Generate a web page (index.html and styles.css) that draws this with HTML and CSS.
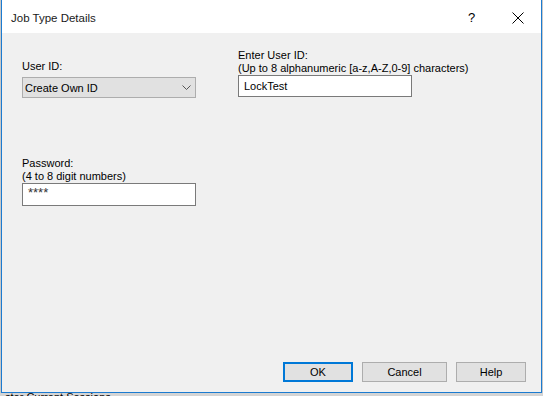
FILE: index.html
```html
<!DOCTYPE html>
<html lang="en">
  <head>
    <meta charset="UTF-8" />
    <title>Job Type Details</title>
    <link rel="stylesheet" href="styles.css">
  </head>
  <body>
    <div class="window">
      <div class="titlebar">
        <span class="title">Job Type Details</span>
        <span class="help">?</span>
        <span class="close">
          <svg width="12" height="12" viewBox="0 0 12 12">
            <path d="M0.5 0.5 L11.5 11.5 M11.5 0.5 L0.5 11.5" stroke="#000" stroke-width="1" />
          </svg>
        </span>
      </div>

      <div class="content">
        <div class="fields">
          <div class="column left">
            <div class="group user">
              <label>User ID:</label>
              <div class="select">
                <span>Create Own ID</span>
                <svg width="9" height="5" viewBox="0 0 9 5">
                  <path d="M0.5 0.5 L4.5 4.5 L8.5 0.5" fill="none" stroke="#555" stroke-width="1" />
                </svg>
              </div>
            </div>
            <div class="group password">
              <label>Password:</label>
              <label>(4 to 8 digit numbers)</label>
              <div class="input pass">****</div>
            </div>
          </div>

          <div class="column right">
            <div class="group enter">
              <label>Enter User ID:</label>
              <label>(Up to 8 alphanumeric [a-z,A-Z,0-9] characters)</label>
              <div class="input">LockTest</div>
            </div>
          </div>
        </div>

        <div class="buttons">
          <button class="btn ok">OK</button>
          <button class="btn cancel">Cancel</button>
          <button class="btn help_btn">Help</button>
        </div>
      </div>
    </div>
    <div class="under">ster Current Sessions</div>
  </body>
</html>
```

FILE: styles.css
```css
* {
  margin: 0;
  padding: 0;
  box-sizing: border-box;
}

body {
  width: 543px;
  height: 396px;
  overflow: hidden;
  background: #c8c8c8;
  font-family: "Liberation Sans", Arial, sans-serif;
  font-size: 11px;
  color: #000;
}

.window {
  margin-left: 1px;
  width: 541px;
  height: 393px;
  border: 1px solid #1c7bd0;
  border-top: none;
  background: #f0f0f0;
  display: flex;
  flex-direction: column;

  .titlebar {
    height: 33px;
    background: #fff;
    display: flex;
    align-items: center;
    padding-left: 9px;
    padding-top: 2px;

    .title {
      flex: 1;
      font-size: 11.5px;
      color: #1a1a1a;
    }

    .help {
      width: 14px;
      font-size: 13px;
      margin-right: 30px;
    }

    .close {
      display: flex;
      margin-right: 17px;
    }
  }

  .content {
    flex: 1;
    display: flex;
    flex-direction: column;
    padding: 0 15px 10px 20px;

    .fields {
      display: grid;
      grid-template-columns: 174px 174px;
      column-gap: 42px;
    }

    label {
      display: block;
      line-height: 13px;
      height: 13px;
      white-space: nowrap;
    }

    .left .user {
      margin-top: 27px;

      .select {
        margin-top: 4px;
        height: 21px;
        background: #e1e1e1;
        border: 1px solid #adadad;
        display: flex;
        align-items: center;
        justify-content: space-between;
        padding: 0 4px 0 2px;
      }
    }

    .left .password {
      margin-top: 59px;

      .input {
        height: 23px;
      }
    }

    .right .enter {
      margin-top: 16px;
    }

    .input {
      height: 22px;
      background: #fff;
      border: 1px solid #7a7a7a;
      display: flex;
      align-items: center;
      padding-left: 5px;
    }

    .input.pass {
      align-items: flex-start;
      padding-top: 2px;
      padding-left: 5px;
      font-size: 13px;
      line-height: 13px;
      color: #333;
    }

    .buttons {
      margin-top: auto;
      display: flex;
      justify-content: flex-end;
      gap: 9px;

      .btn {
        height: 20px;
        background: #e1e1e1;
        border: 1px solid #adadad;
        font-family: inherit;
        font-size: 11px;
        color: #000;
      }

      .ok {
        width: 70px;
        border: 2px solid #0078d7;
      }

      .cancel {
        width: 85px;
      }

      .help_btn {
        width: 70px;
      }
    }
  }
}

.under {
  height: 3px;
  overflow: hidden;
  font-size: 11px;
  line-height: 8px;
  padding-left: 5px;
  background: #d4d4d4;
}
```
